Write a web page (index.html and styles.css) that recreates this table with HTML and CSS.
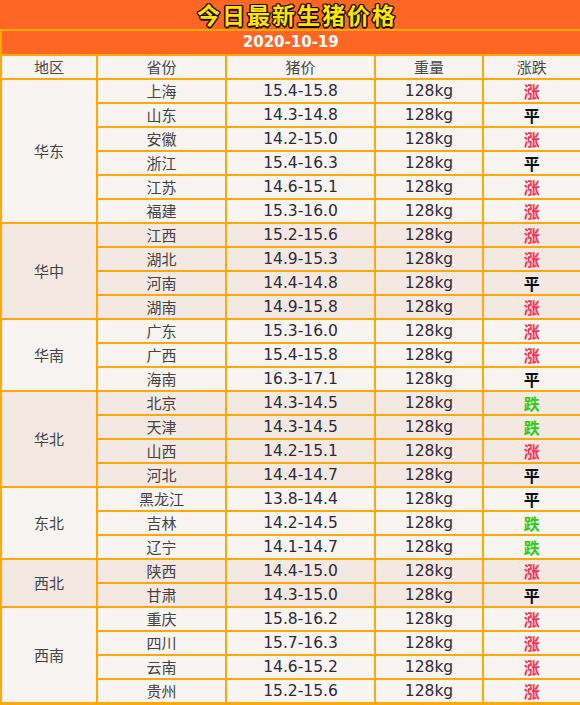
FILE: index.html
```html
<!DOCTYPE html>
<html lang="zh">
<head>
<meta charset="utf-8">
<title>今日最新生猪价格</title>
<link rel="stylesheet" href="styles.css">
</head>
<body>
<div class="title"><span class="title-text">今日最新生猪价格</span></div>
<table class="price">
<colgroup><col class="c1"><col class="c2"><col class="c3"><col class="c4"><col class="c5"></colgroup>
<tr class="date"><td colspan="5">2020-10-19</td></tr>
<tr class="head"><td>地区</td><td>省份</td><td>猪价</td><td>重量</td><td>涨跌</td></tr>
<tbody class="g-a">
<tr><td class="region" rowspan="6">华东</td><td>上海</td><td class="num">15.4-15.8</td><td class="num">128kg</td><td class="up">涨</td></tr>
<tr><td>山东</td><td class="num">14.3-14.8</td><td class="num">128kg</td><td class="flat">平</td></tr>
<tr><td>安徽</td><td class="num">14.2-15.0</td><td class="num">128kg</td><td class="up">涨</td></tr>
<tr><td>浙江</td><td class="num">15.4-16.3</td><td class="num">128kg</td><td class="flat">平</td></tr>
<tr><td>江苏</td><td class="num">14.6-15.1</td><td class="num">128kg</td><td class="up">涨</td></tr>
<tr><td>福建</td><td class="num">15.3-16.0</td><td class="num">128kg</td><td class="up">涨</td></tr>
</tbody>
<tbody class="g-b">
<tr><td class="region" rowspan="4">华中</td><td>江西</td><td class="num">15.2-15.6</td><td class="num">128kg</td><td class="up">涨</td></tr>
<tr><td>湖北</td><td class="num">14.9-15.3</td><td class="num">128kg</td><td class="up">涨</td></tr>
<tr><td>河南</td><td class="num">14.4-14.8</td><td class="num">128kg</td><td class="flat">平</td></tr>
<tr><td>湖南</td><td class="num">14.9-15.8</td><td class="num">128kg</td><td class="up">涨</td></tr>
</tbody>
<tbody class="g-a">
<tr><td class="region" rowspan="3">华南</td><td>广东</td><td class="num">15.3-16.0</td><td class="num">128kg</td><td class="up">涨</td></tr>
<tr><td>广西</td><td class="num">15.4-15.8</td><td class="num">128kg</td><td class="up">涨</td></tr>
<tr><td>海南</td><td class="num">16.3-17.1</td><td class="num">128kg</td><td class="flat">平</td></tr>
</tbody>
<tbody class="g-b">
<tr><td class="region" rowspan="4">华北</td><td>北京</td><td class="num">14.3-14.5</td><td class="num">128kg</td><td class="down">跌</td></tr>
<tr><td>天津</td><td class="num">14.3-14.5</td><td class="num">128kg</td><td class="down">跌</td></tr>
<tr><td>山西</td><td class="num">14.2-15.1</td><td class="num">128kg</td><td class="up">涨</td></tr>
<tr><td>河北</td><td class="num">14.4-14.7</td><td class="num">128kg</td><td class="flat">平</td></tr>
</tbody>
<tbody class="g-a">
<tr><td class="region" rowspan="3">东北</td><td>黑龙江</td><td class="num">13.8-14.4</td><td class="num">128kg</td><td class="flat">平</td></tr>
<tr><td>吉林</td><td class="num">14.2-14.5</td><td class="num">128kg</td><td class="down">跌</td></tr>
<tr><td>辽宁</td><td class="num">14.1-14.7</td><td class="num">128kg</td><td class="down">跌</td></tr>
</tbody>
<tbody class="g-b">
<tr><td class="region" rowspan="2">西北</td><td>陕西</td><td class="num">14.4-15.0</td><td class="num">128kg</td><td class="up">涨</td></tr>
<tr><td>甘肃</td><td class="num">14.3-15.0</td><td class="num">128kg</td><td class="flat">平</td></tr>
</tbody>
<tbody class="g-a">
<tr><td class="region" rowspan="4">西南</td><td>重庆</td><td class="num">15.8-16.2</td><td class="num">128kg</td><td class="up">涨</td></tr>
<tr><td>四川</td><td class="num">15.7-16.3</td><td class="num">128kg</td><td class="up">涨</td></tr>
<tr><td>云南</td><td class="num">14.6-15.2</td><td class="num">128kg</td><td class="up">涨</td></tr>
<tr><td>贵州</td><td class="num">15.2-15.6</td><td class="num">128kg</td><td class="up">涨</td></tr>
</tbody>
</table>
</body>
</html>
```

FILE: styles.css
```css
html, body {
  margin: 0;
  padding: 0;
  background: #ffffff;
}
body {
  width: 580px;
  font-family: "DejaVu Sans", "Noto Sans CJK SC", sans-serif;
  color: #3a3a3a;
}
.title {
  height: 29px;
  background: #ff6624;
  display: flex;
  align-items: center;
  justify-content: center;
  padding-left: 14px;
  padding-bottom: 2px;
  box-sizing: border-box;
}
.title-text {
  display: block;
  line-height: 24px;
  height: 24px;
  font-family: "Noto Sans CJK SC", sans-serif;
  font-weight: 700;
  font-size: 23px;
  color: #ffe400;
  letter-spacing: 2px;
  text-shadow: -1px -1px 0 #1a0d00, 1px -1px 0 #1a0d00, -1px 1px 0 #1a0d00, 1px 1px 0 #1a0d00,
               0 -1.5px 0 #1a0d00, 0 1.5px 0 #1a0d00, -1.5px 0 0 #1a0d00, 1.5px 0 0 #1a0d00;
}
.price {
  width: 580px;
  table-layout: fixed;
  border-collapse: collapse;
  border-left: 2px solid #ffa808;
  border-right: 3px solid #ffa808;
  border-top: 2px solid #ffa808;
  border-bottom: 4px solid #ffa808;
}
.c1 { width: 96px; }
.c2 { width: 129px; }
.c3 { width: 149px; }
.c4 { width: 108px; }
.c5 { width: 98px; }
.price td {
  border: 2px solid #ffa808;
  padding: 0;
  height: 22px;
  line-height: 22px;
  text-align: center;
  font-size: 15px;
  font-family: "Noto Sans CJK SC", sans-serif;
  color: #444444;
  background: #f8f4f2;
}
.price .date td {
  background: #ff6624;
  color: #ffffff;
  font-family: "DejaVu Sans", sans-serif;
  font-weight: 700;
  font-size: 15px;
  height: 23px;
  line-height: 23px;
}
.price .head td {
  background: #f8f4f2;
  color: #4a4a4a;
}
.price .g-b td {
  background: #f3e8e2;
}
.price td.num {
  font-family: "DejaVu Sans", sans-serif;
  font-size: 15.5px;
  color: #2e2a3a;
}
.price td.region {
  color: #444444;
}
.price td.up {
  color: #ff2f55;
  font-weight: 700;
  font-size: 16px;
}
.price td.flat {
  color: #111111;
  font-weight: 700;
  font-size: 16px;
}
.price td.down {
  color: #33cc11;
  font-weight: 700;
  font-size: 16px;
}
```
